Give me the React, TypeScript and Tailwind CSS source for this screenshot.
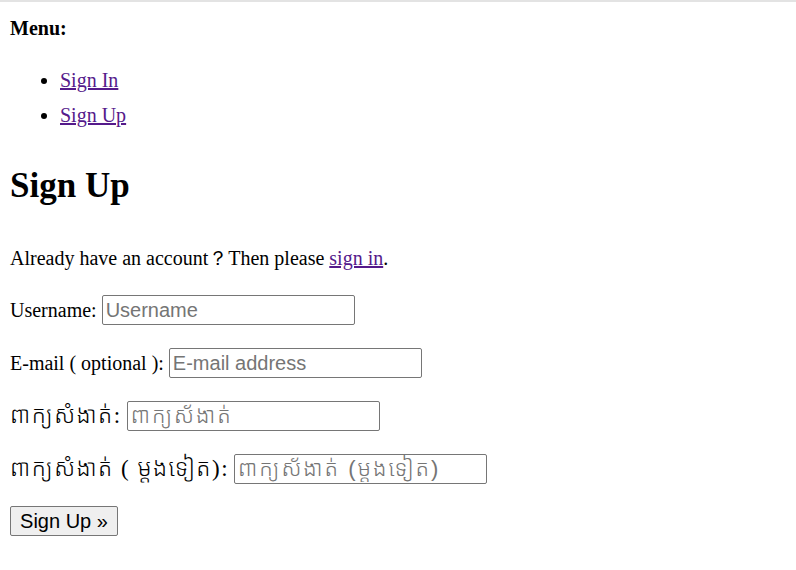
import React from 'react';

const serif = "font-['Liberation_Serif','Noto_Sans_Khmer','Khmer_OS',serif]";
const sans = "font-['Liberation_Sans','Noto_Sans_Khmer','Khmer_OS',sans-serif]";

const inputCls = `${sans} w-[253px] h-[30px] border border-[#767676] rounded-[2px] px-[3px] text-[20px] leading-[24px] text-black placeholder:text-[#757575] outline-none`;

const Field = ({ label, placeholder, khmer }: { label: string; placeholder: string; khmer?: boolean }) => (
  <p className="mt-[23px] flex items-center h-[30px]">
    <span className={khmer ? 'text-[23px] tracking-[1.5px] font-light' : 'text-[20px]'}>{label}</span>
    <input
      type="text"
      placeholder={placeholder}
      className={`${inputCls} ml-[5px] ${khmer ? 'text-[22px] tracking-[2px] font-light' : ''}`}
    />
  </p>
);

export default function App() {
  return (
    <div className={`min-h-screen bg-white text-black ${serif} border-t-2 border-[#e3e3e3]`}>
      <div className="px-[10px] pt-[15px]">
        <p className="text-[20px] font-bold leading-[23px]">Menu:</p>
        <ul className="list-disc pl-[50px] mt-[29px] text-[20px] leading-[23px] space-y-[12px]">
          <li><a href="#" className="underline text-[#551a8b]">Sign In</a></li>
          <li><a href="#" className="underline text-[#551a8b]">Sign Up</a></li>
        </ul>
        <h1 className="text-[35px] font-bold leading-[40px] mt-[39px]">Sign Up</h1>
        <p className="text-[20px] leading-[23px] mt-[41px]">
          Already have an account？Then please <a href="#" className="underline text-[#551a8b]">sign in</a>.
        </p>
        <form className="pt-[2px]">
          <Field label="Username:" placeholder="Username" />
          <Field label="E-mail ( optional ):" placeholder="E-mail address" />
          <Field label="ពាក្យសំងាត់:" placeholder="ពាក្យស័ងាត់" khmer />
          <Field label="ពាក្យសំងាត់ ( ម្តងទៀត):" placeholder="ពាក្យស័ងាត់ (ម្តងទៀត)" khmer />
          <p className="mt-[22px]">
            <button type="submit" className={`${sans} w-[108px] h-[30px] bg-[#efefef] border border-[#767676] rounded-[2px] text-[20px] leading-[24px] text-black`}>
              Sign Up »
            </button>
          </p>
        </form>
      </div>
    </div>
  );
}
